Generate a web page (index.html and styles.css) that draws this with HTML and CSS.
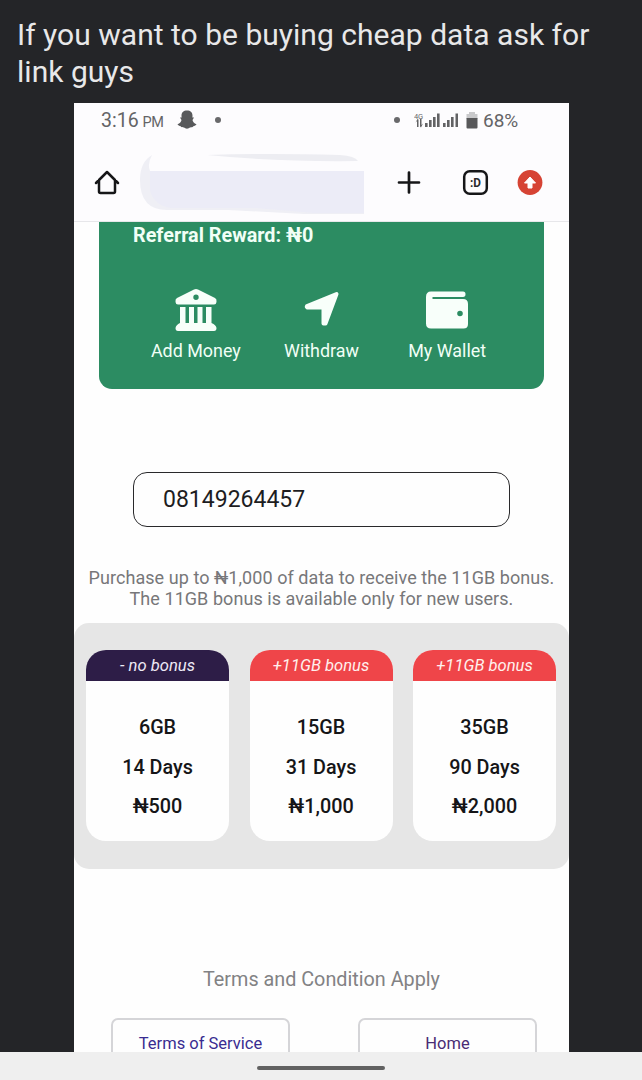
FILE: index.html
```html
<!DOCTYPE html>
<html lang="en">
<head>
<meta charset="utf-8">
<title>Data offers</title>
<link rel="stylesheet" href="styles.css">
</head>
<body>
<div class="screen">
  <p class="caption">If you want to be buying cheap data ask for<br>link guys</p>
  <main class="phone">
    <div class="status">
      <span class="time">3:16<small>PM</small></span>
      <svg width="20" height="20" viewBox="0 0 20 20"><path fill="#58595b" d="M10 .5C6.500.5 4.500 2.500 4.500 5.500l.1 2-1.600-.1L4.500 10c-.3 1.800-1.600 3.300-4 4.300.5 1.500 2 1.500 3.200 1.900.6 1.300 2.100.8 3.100 1.300 1 .4 1.900 1.200 3.200 1.200s2.200-.8 3.200-1.200c1-.5 2.500 0 3.100-1.300 1.200-.4 2.700-.4 3.200-1.900-2.400-1-3.700-2.500-4-4.300l1.500-2.600-1.600.1.100-2C15.500 2.500 13.500.5 10 .5z"/></svg>
      <span class="dot"></span>
      <span class="spacer"></span>
      <span class="dot right"></span>
      <svg width="45" height="17" viewBox="0 0 45 17"><text x="0" y="6.500" font-size="7.500" fill="#68686a" font-family="Roboto, sans-serif" textLength="9">4G</text><g fill="#626264"><path d="M3 15V9L1.500 10.500 3.500 7l1 .5V15zM6 7h1.500v6L9 11.500 7 15.500l-1-1z"/><path d="M11 11h2.600v4H11zM15 8h2.600v7H15zM19 5h2.600v10H19zM23 1.500h2.600V15H23zM29 11h2.600v4H29zM33 8h2.600v7H33zM37 5h2.600v10H37zM41.500 1.500H44V15h-2.500z"/></g></svg>
      <svg class="battery" width="12" height="17" viewBox="0 0 12 17"><path fill="#c9c9cb" d="M3 0h6v2h2.500v5H.5V2H3z"/><path fill="#58585a" d="M.5 6h11v9.500q0 1-1 1h-9q-1 0-1-1z"/></svg>
      <span class="percent">68%</span>
    </div>
    <div class="toolbar">
      <svg width="495" height="76" viewBox="0 0 495 76">
        <path fill="#efeff5" d="M78 15Q66 22 66 40q0 30 27 30h61l76 4h60V31H76q-3-7 2-16z"/>
        <path fill="#ececf7" d="M76 31h214v42h-50l-58-5h-82q-18 0-24-17z"/>
        <path fill="#ededf2" d="M133 15q60-2 133 0 15 1 18 6-80 1-151-6z"/>
        <path d="M22 43L33 32l11 11M25 40v11.500q0 1.500 1.500 1.500h13q1.500 0 1.500-1.500V40" fill="none" stroke="#161618" stroke-width="2.500" stroke-linecap="round" stroke-linejoin="round"/>
        <path d="M325 42.500h20M335 32.500v20" fill="none" stroke="#161618" stroke-width="2.700" stroke-linecap="round"/>
        <rect x="390.200" y="31.200" width="22.600" height="22.600" rx="5.500" fill="none" stroke="#161618" stroke-width="2.500"/>
        <text x="396" y="46.500" font-family="Roboto, sans-serif" font-size="12" font-weight="700" fill="#2a2a2c" textLength="11" lengthAdjust="spacingAndGlyphs">:D</text>
        <circle cx="456" cy="42.500" r="12.400" fill="#d64334"/>
        <path fill="#fff" stroke="#fff" stroke-linejoin="round" d="M456 37l5.500 6H458v5h-4v-5h-3.500z"/>
      </svg>
    </div>
    <section class="wallet">
      <div class="reward">Referral Reward: ₦0</div>
      <div class="actions">
        <div class="action">
          <svg width="42" height="42" viewBox="0 0 42 42"><path fill="#f8fffa" fill-rule="evenodd" d="M21 0q1 0 2 .5L40 9q2 1 1.500 4-.3 2.500-2.500 2.500H3Q.8 15.500.5 13 0 10 2 9L19 .5q1-.5 2-.5zm0 5.500a2.700 2.700 0 1 0 0 5.400 2.700 2.700 0 0 0 0-5.400zM5 18h5.500v16H14V18h5v16h3.500V18h5v16H31V18h5.500v16q4.500 2 5 5 0 3-2.500 3H3q-2.500 0-2.500-3Q1 36 5 34z"/></svg>
          <span>Add Money</span>
        </div>
        <div class="action">
          <svg width="42" height="42" viewBox="0 0 42 42"><path fill="#f8fffa" stroke="#f8fffa" stroke-width="4" stroke-linejoin="round" d="M6 17L35.500 5 24.500 34.500H22.500V18.500H6.500q-1-.7-.5-1.500z"/></svg>
          <span>Withdraw</span>
        </div>
        <div class="action">
          <svg width="42" height="42" viewBox="0 0 42 42"><path fill="#f8fffa" fill-rule="evenodd" d="M5 2.500h32q2.500 0 2.500 2.700T37 8H6.500v2H37q5 0 5 5v20q0 4.500-4.500 4.500H5q-5 0-5-5V8q0-5.500 5-5.500zm29 19.200a2.800 2.800 0 1 0 0 5.600 2.800 2.800 0 0 0 0-5.600z"/></svg>
          <span>My Wallet</span>
        </div>
      </div>
    </section>
    <div class="phone-number">08149264457</div>
    <p class="notice">Purchase up to ₦1,000 of data to receive the 11GB bonus.<br>The 11GB bonus is available only for new users.</p>
    <section class="plans">
      <article class="plan"><h2 class="none">- no bonus</h2><p>6GB</p><p>14 Days</p><p>₦500</p></article>
      <article class="plan"><h2>+11GB bonus</h2><p>15GB</p><p>31 Days</p><p>₦1,000</p></article>
      <article class="plan"><h2>+11GB bonus</h2><p>35GB</p><p>90 Days</p><p>₦2,000</p></article>
    </section>
    <p class="terms">Terms and Condition Apply</p>
    <nav class="links"><a class="tos">Terms of Service</a><a class="home">Home</a></nav>
  </main>
  <footer class="gesture"><span></span></footer>
</div>
</body>
</html>
```
FILE: styles.css
```css
* { box-sizing: border-box; }
body { margin: 0; background: #242528; font-family: Roboto, "Liberation Sans", sans-serif; }
p, h2 { margin: 0; }
svg { display: block; flex: none; }
.screen { width: 642px; height: 1080px; display: flex; flex-direction: column; overflow: hidden; }
.caption { height: 103px; flex: none; padding: 17px 0 0 17px; font-size: 30px; line-height: 36.500px; color: #e8e8e9; white-space: nowrap; letter-spacing: .02px; }
.phone { width: 495px; height: 949px; flex: none; margin-left: 74px; background: #fefefe; overflow: hidden; display: flex; flex-direction: column; }
.status { height: 42px; flex: none; display: flex; align-items: center; padding: 0 50px 8px 27px; color: #646466; font-size: 19.500px; background: #fdfcfe; }
.time { width: 76px; display: flex; align-items: baseline; gap: 4px; white-space: nowrap; }
.time small { font-size: 14.500px; letter-spacing: -.5px; }
.dot { width: 6px; height: 6px; border-radius: 50%; background: #69696b; margin-left: 18px; }
.spacer { flex: 1; }
.dot.right { margin: 0 14px 0 0; }
.battery { margin: 0 5px 0 7px; }
.percent { width: 36px; font-size: 19px; white-space: nowrap; }
.toolbar { height: 77px; flex: none; background: #fdfcfe; border-bottom: 1px solid #e7e7ea; }
.toolbar svg { margin-top: -5px; }
.wallet { height: 167px; flex: none; margin: 0 25px; background: #2c8c62; border-radius: 0 0 13px 13px; padding-top: 3px; color: #f1fff6; }
.reward { padding-left: 34px; font-size: 19.800px; line-height: 22px; font-weight: 700; }
.actions { display: flex; padding: 42px 34px 0; }
.action { flex: 1; display: flex; flex-direction: column; align-items: center; font-size: 17.900px; line-height: 22px; gap: 9px; white-space: nowrap; }
.phone-number { flex: none; margin: 83px 59px 0; height: 55px; border: 1.5px solid #29292b; border-radius: 14px; padding-left: 29px; line-height: 53px; font-size: 23px; color: #1d1d1f; }
.notice { flex: none; margin-top: 41px; text-align: center; font-size: 18px; line-height: 20.500px; color: #777779; white-space: nowrap; letter-spacing: .06px; }
.plans { flex: none; margin-top: 14px; height: 246px; border-radius: 15px; background: #e6e6e6; padding: 27px 12px 28px; display: grid; grid-template-columns: repeat(3, 143px); column-gap: 20.500px; }
.plan { background: #fefefe; border-radius: 20px; overflow: hidden; text-align: center; font-size: 19.800px; font-weight: 500; line-height: 39.500px; color: #151517; }
.plan h2 { height: 31px; line-height: 32px; margin-bottom: 27px; background: #ef4549; color: #fff0ed; font-size: 16.600px; font-weight: 400; font-style: italic; }
.plan h2.none { background: #2d1d47; color: #eee9f5; }
.terms { flex: none; margin-top: 98px; text-align: center; font-size: 19.800px; line-height: 26px; color: #828284; }
.links { flex: none; display: flex; justify-content: space-between; padding: 0 32px 0 37px; margin-top: 25px; }
.links a { width: 179px; height: 60px; border: 2px solid #d5d5d8; border-radius: 7px; text-align: center; padding-top: 13px; font-size: 16.500px; line-height: 22px; color: #392c91; }
.links .home { color: #4a2c74; }
.gesture { height: 28px; flex: none; background: #efefef; display: flex; justify-content: center; padding-top: 14px; }
.gesture span { width: 128px; height: 4px; border-radius: 2px; background: #616161; }
```
